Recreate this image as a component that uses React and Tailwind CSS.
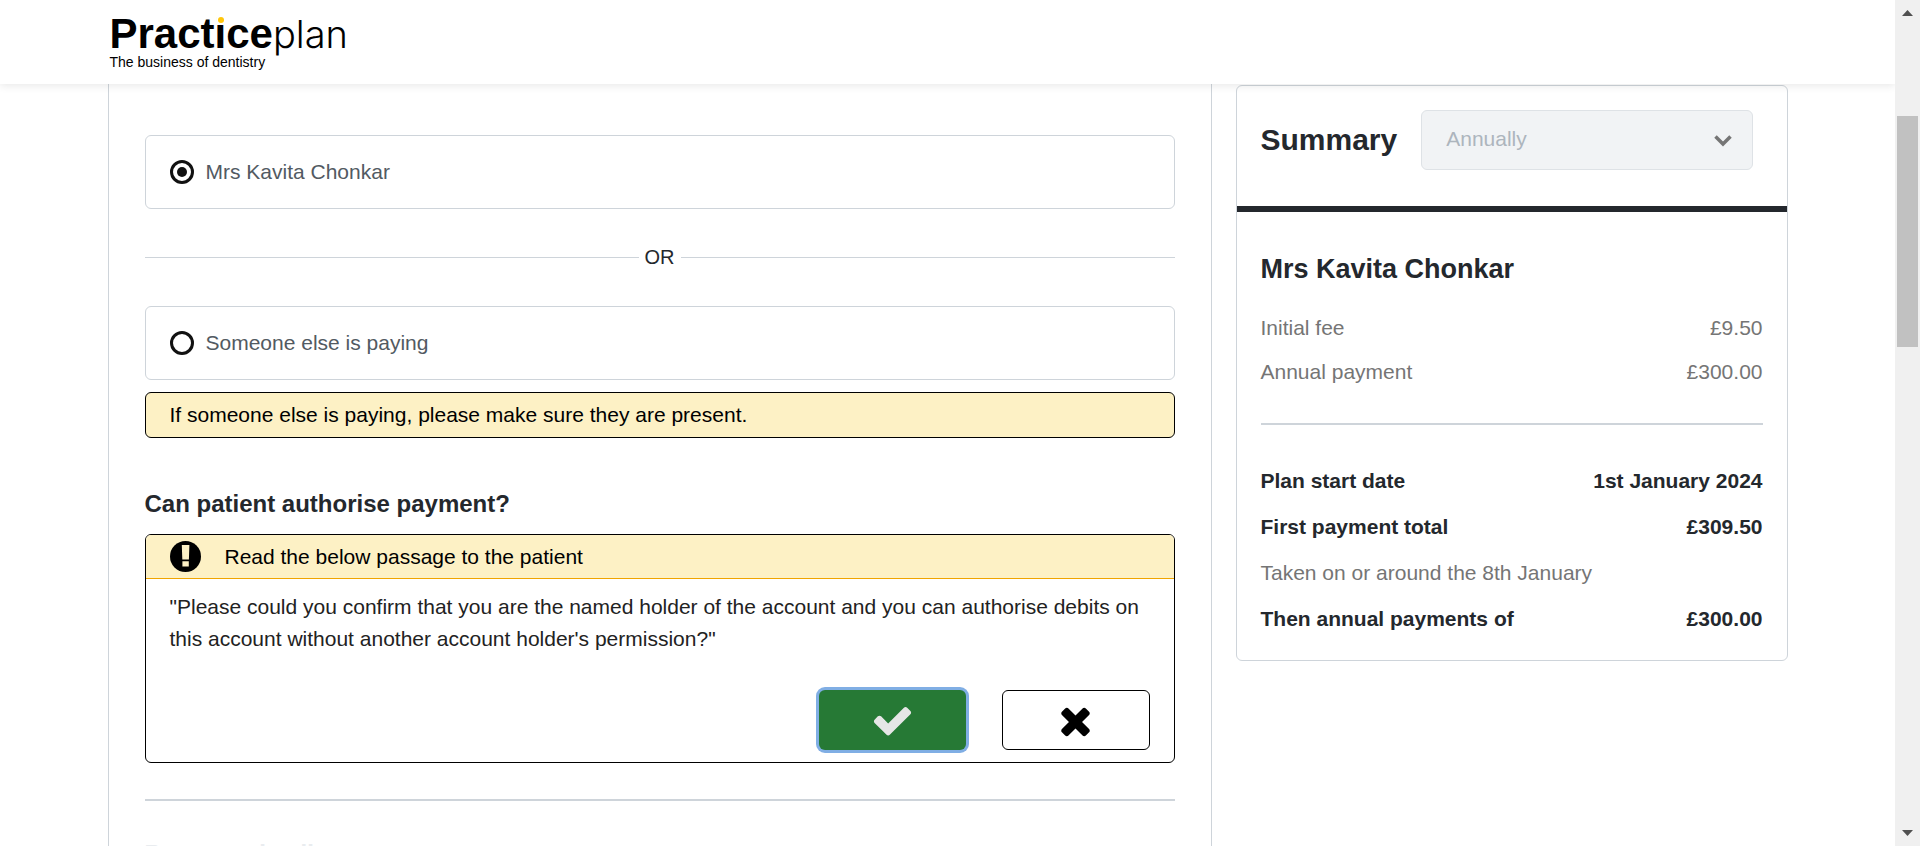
const lines = [
  ["Initial fee", "£9.50"],
  ["Annual payment", "£300.00"],
];

function Logo() {
  return (
    <a href="#" aria-label="Practice plan" className="flex flex-col pt-[14px] text-black">
      <span className="flex text-[42px] leading-10">
        <span className="font-bold">Pract</span>
        <span className="relative font-bold">
          i
          <span className="absolute top-[2px] left-[2px] grid h-2 w-2 place-items-center bg-white">
            <span className="size-[6px] rounded-full bg-[#ffc60b]" />
          </span>
        </span>
        <span className="font-bold">ce</span>
        <span className="font-['Inter'] text-[38px] font-light">plan</span>
      </span>
      <span className="text-sm leading-4">The business of dentistry</span>
    </a>
  );
}

function PayerOption({ id, label, checked }) {
  return (
    <label
      htmlFor={id}
      className="flex h-[74px] items-center gap-3 rounded-md border border-[#ced4da] px-6 text-[21px] text-[#525a62]"
    >
      <input
        id={id}
        type="radio"
        name="payer"
        defaultChecked={checked}
        className="grid size-6 appearance-none place-content-center rounded-full border-3 border-[#111] before:size-[10px] before:rounded-full checked:before:bg-[#111]"
      />
      {label}
    </label>
  );
}

function AlertIcon() {
  return (
    <svg viewBox="0 0 31 31" className="size-[31px] shrink-0" aria-hidden="true">
      <circle cx="15.500" cy="15.500" r="15.500" fill="#000" />
      <path d="M11.800 4h7.600l-.5 14.500h-6.600zM12.400 20.200h6.400v5.400h-6.400z" fill="#fdf1c5" />
    </svg>
  );
}

function CheckIcon() {
  return (
    <svg viewBox="0 0 1792 1792" className="size-[43px]" fill="currentColor" aria-hidden="true">
      <path d="M1671 566q0 40-28 68l-724 724-136 136q-28 28-68 28t-68-28l-136-136-362-362q-28-28-28-68t28-68l136-136q28-28 68-28t68 28l294 295 656-657q28-28 68-28t68 28l136 136q28 28 28 68z" />
    </svg>
  );
}

function CrossIcon() {
  return (
    <svg viewBox="0 0 1792 1792" className="size-[43px]" fill="currentColor" aria-hidden="true">
      <path d="M1490 1322q0 40-28 68l-136 136q-28 28-68 28t-68-28l-294-294-294 294q-28 28-68 28t-68-28l-136-136q-28-28-28-68t28-68l294-294-294-294q-28-28-28-68t28-68l136-136q28-28 68-28t68 28l294 294 294-294q28-28 68-28t68 28l136 136q28 28 28 68t-28 68l-294 294 294 294q28 28 28 68z" />
    </svg>
  );
}

function Row({ label, value }) {
  return (
    <div className="flex justify-between gap-4">
      <dt>{label}</dt>
      <dd>{value}</dd>
    </div>
  );
}

function Summary() {
  return (
    <aside className="self-start rounded-md border border-[#ced4da] bg-white text-[#24282d]">
      <div className="flex items-center gap-6 border-b-6 border-[#24282d] pt-6 pr-[34px] pb-9 pl-6">
        <label htmlFor="frequency" className="text-3xl font-bold">
          Summary
        </label>
        <div className="relative grow">
          <select
            id="frequency"
            disabled
            className="h-[60px] w-full appearance-none rounded-md border border-[#dee2e6] bg-[#f1f3f5] px-6 pb-0.5 text-[21px] text-[#adb5bd] opacity-100"
          >
            <option>Annually</option>
          </select>
          <svg
            viewBox="0 0 18 12"
            className="pointer-events-none absolute top-[25px] right-[21px] h-3 w-[18px]"
            fill="none"
            stroke="#757575"
            strokeWidth="3.500"
            aria-hidden="true"
          >
            <path d="M1.500 1.500 9 9l7.500-7.500" />
          </svg>
        </div>
      </div>
      <div className="px-6 pt-[41px] pb-[18px]">
        <h2 className="text-[27px] leading-8 font-bold">Mrs Kavita Chonkar</h2>
        <dl className="mt-[21px] flex flex-col text-[21px] leading-11 text-[#757575]">
          {lines.map(([label, value]) => (
            <Row key={label} label={label} value={value} />
          ))}
        </dl>
        <hr className="mt-[29px] border-t-2 border-[#ced4da]" />
        <dl className="mt-[33px] flex flex-col text-[21px] leading-[46px] font-bold">
          <Row label="Plan start date" value="1st January 2024" />
          <Row label="First payment total" value="£309.50" />
          <div className="font-normal text-[#757575]">Taken on or around the 8th January</div>
          <Row label="Then annual payments of" value="£300.00" />
        </dl>
      </div>
    </aside>
  );
}

function Authorisation() {
  return (
    <section>
      <h2 className="mt-12 text-2xl leading-9 font-bold text-[#24282d]">Can patient authorise payment?</h2>
      <div className="mt-3 overflow-hidden rounded-md border border-black">
        <div className="flex h-11 items-center gap-6 border-b border-[#f0a500] bg-[#fdf1c5] px-6 text-[21px] text-black">
          <AlertIcon />
          Read the below passage to the patient
        </div>
        <p className="px-6 pt-3 text-[21px] leading-8 text-[#222]">
          "Please could you confirm that you are the named holder of the account and you can authorise debits on
          this account without another account holder's permission?"
        </p>
        <div className="mt-[35px] flex justify-end gap-9 px-6 pb-3">
          <button
            type="button"
            aria-label="Yes"
            className="grid h-[60px] w-[147px] place-items-center rounded-md bg-[#267935] text-[#e6e6e6] ring-3 ring-[#80aee4]"
          >
            <CheckIcon />
          </button>
          <button
            type="button"
            aria-label="No"
            className="grid h-[60px] w-[148px] place-items-center rounded-md border border-black bg-white text-black"
          >
            <CrossIcon />
          </button>
        </div>
      </div>
    </section>
  );
}

function Scrollbar() {
  return (
    <div className="z-20 flex w-[25px] shrink-0 flex-col items-center bg-[#f0f0f0]" aria-hidden="true">
      <svg viewBox="0 0 11 6" className="mt-[10px] h-[6px] w-[11px]">
        <path d="M0 6 5.500 0 11 6z" fill="#505050" />
      </svg>
      <div className="mt-[100px] h-[231px] w-[21px] bg-[#c1c1c1]" />
      <svg viewBox="0 0 11 6" className="mt-auto mb-[10px] h-[6px] w-[11px]">
        <path d="M0 0 5.500 6 11 0z" fill="#505050" />
      </svg>
    </div>
  );
}

export default function App() {
  return (
    <div className="flex h-screen overflow-hidden bg-white font-['Liberation_Sans',sans-serif]">
      <div className="flex min-w-0 grow flex-col">
        <header className="z-10 h-[84px] shrink-0 bg-white px-6 shadow-[0_2px_8px_rgba(0,0,0,0.09)]">
          <div className="mx-auto flex max-w-[1680px] pl-[2px]">
            <Logo />
          </div>
        </header>
        <div className="min-h-0 grow overflow-hidden px-6">
          <div className="mx-auto grid max-w-[1680px] grid-cols-[2fr_1fr] gap-6">
            <main className="border-x border-[#ced4da] px-9 pt-[51px]">
              <PayerOption id="payer-patient" label="Mrs Kavita Chonkar" checked />
              <div className="my-8 flex items-center gap-[6px] text-xl leading-[33px] text-[#24282d]">
                <hr className="grow border-[#ced4da]" />
                OR
                <hr className="grow border-[#ced4da]" />
              </div>
              <PayerOption id="payer-other" label="Someone else is paying" />
              <p className="mt-3 flex h-[46px] items-center rounded-md border border-black bg-[#fdf1c5] px-6 text-[21px] text-black">
                If someone else is paying, please make sure they are present.
              </p>
              <Authorisation />
              <hr className="mt-9 border-t-2 border-[#ced4da]" />
              <h2 className="mt-[35px] text-2xl leading-9 font-bold text-[#e9ecef]">Payment details</h2>
            </main>
            <div className="pt-px">
              <Summary />
            </div>
          </div>
        </div>
      </div>
      <Scrollbar />
    </div>
  );
}
